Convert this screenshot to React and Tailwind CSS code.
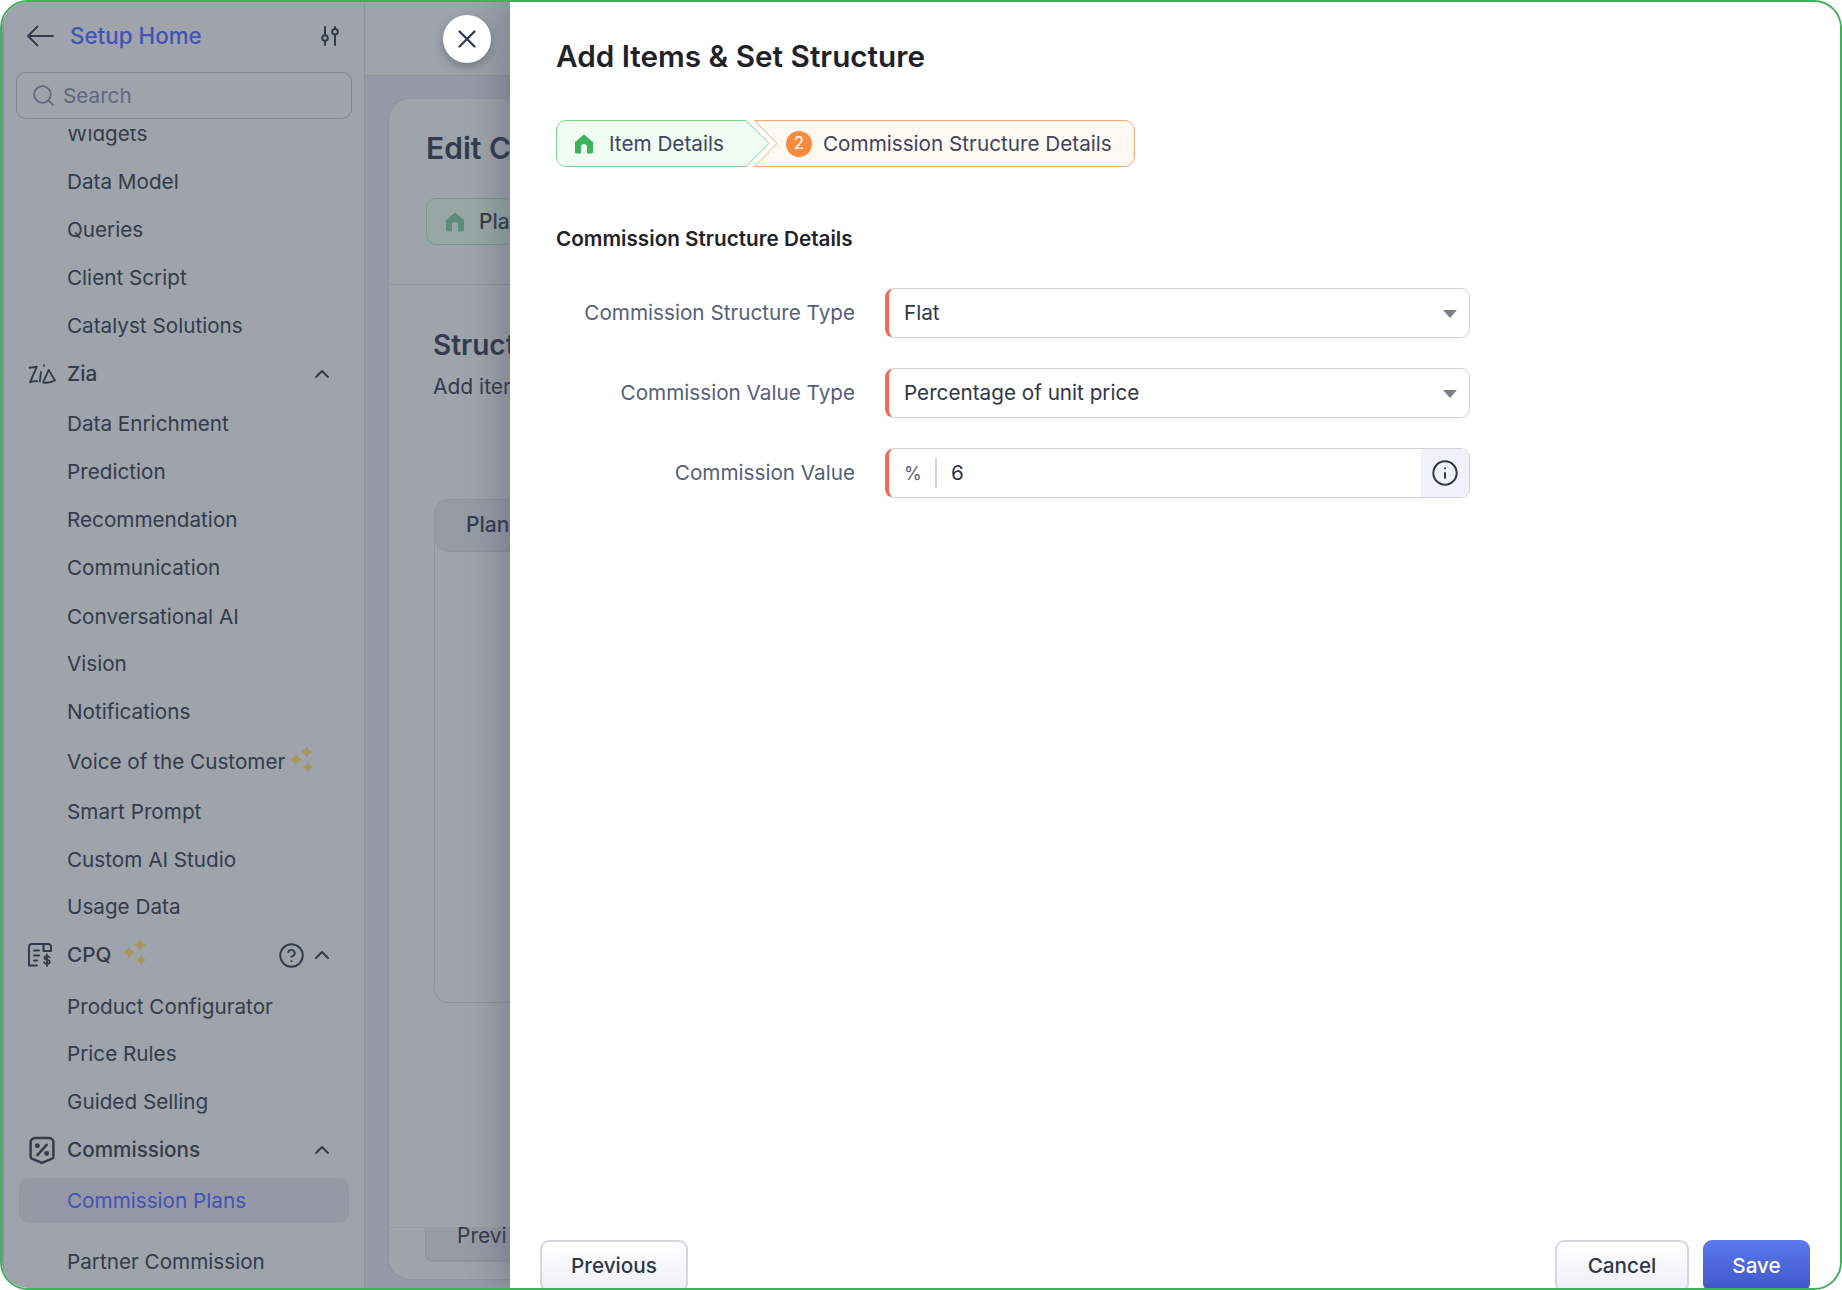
import { ChevronUp, CircleHelp, Info, Search, X } from 'lucide-react';

const sidebarRows = [
  { label: 'Widgets', mt: '' },
  { label: 'Data Model', mt: '' },
  { label: 'Queries', mt: '' },
  { label: 'Client Script', mt: '' },
  { label: 'Catalyst Solutions', mt: '' },
  { label: 'Zia', mt: '', icon: 'zia', open: true },
  { label: 'Data Enrichment', mt: 'mt-[2px]' },
  { label: 'Prediction', mt: '' },
  { label: 'Recommendation', mt: '' },
  { label: 'Communication', mt: '' },
  { label: 'Conversational AI', mt: 'mt-[1px]' },
  { label: 'Vision', mt: '-mt-[1px]' },
  { label: 'Notifications', mt: '' },
  { label: 'Voice of the Customer', mt: 'mt-[2px]', sparkle: true },
  { label: 'Smart Prompt', mt: 'mt-[2px]' },
  { label: 'Custom AI Studio', mt: '' },
  { label: 'Usage Data', mt: '-mt-[1px]' },
  { label: 'CPQ', mt: '', icon: 'cpq', open: true, sparkle: true, help: true },
  { label: 'Product Configurator', mt: 'mt-[4px]' },
  { label: 'Price Rules', mt: '-mt-[1px]' },
  { label: 'Guided Selling', mt: '' },
  { label: 'Commissions', mt: '', icon: 'commission', open: true },
];

function Sparkle({ className }) {
  return (
    <svg viewBox="0 0 24 27" className={className} fill="#a8955a">
      <path d="M17 0Q18.500 4.500 23 6 18.500 7.500 17 12 15.500 7.500 11 6 15.500 4.500 17 0z" />
      <path d="M6 7.500Q7.500 12 12 13.500 7.500 15 6 19.500 4.500 15 0 13.500 4.500 12 6 7.500z" />
      <path d="M18 16Q19.300 19.700 23 21 19.300 22.300 18 26 16.700 22.300 13 21 16.700 19.700 18 16z" />
    </svg>
  );
}

function HomeIcon({ className }) {
  return (
    <svg viewBox="0 0 20 20" className={className} fill="currentColor">
      <path d="M10 0.500 L19 8 V18 a1.500 1.500 0 0 1-1.500 1.500 H13 V13 a3 3 0 0 0-6 0 V19.500 H2.500 A1.500 1.500 0 0 1 1 18 V8 z" />
    </svg>
  );
}

function BackArrow() {
  return (
    <svg viewBox="0 0 28 22" className="w-[28px] h-[22px]" fill="none" stroke="#333b4d" strokeWidth="1.800" strokeLinecap="round" strokeLinejoin="round">
      <path d="M2 11H27M11.500 1.500 2 11l9.500 9.500" />
    </svg>
  );
}

function ZiaIcon() {
  return (
    <svg viewBox="0 0 27 19" className="w-[28px] h-[20px]" fill="none" stroke="#333b4d" strokeWidth="1.800" strokeLinecap="round" strokeLinejoin="round">
      <path d="M1.500 3.500 8.500 2.500 2 17.500Q5.500 16 9 16.500" />
      <path d="M12.500 7.500 11.500 16.500" />
      <path d="M15.500 1v.5" />
      <path d="M14.500 17.500 20 5.500Q23 11 26 15.500 20 19 14.500 17.500z" />
    </svg>
  );
}

function CpqIcon() {
  return (
    <svg viewBox="0 0 24 24" className="w-[24px] h-[24px]" fill="none" stroke="#333b4d" strokeWidth="2" strokeLinecap="round" strokeLinejoin="round">
      <path d="M19 1H4a3 3 0 0 0-3 3v18.500h8" />
      <path d="M15.500 1H20a3 3 0 0 1 3 3v4h-7.500V1" />
      <path d="M6 7.500h5M6 12.500h5M6 17.500h3" />
      <path d="M21.500 14.500c-.6-.9-1.400-1.300-2.500-1.300-1.500 0-2.500.7-2.500 1.800 0 2.600 5.200 1.300 5.200 3.900 0 1.200-1.100 1.900-2.700 1.900-1.300 0-2.300-.5-2.800-1.500M19 11.500v11.500" strokeWidth="1.800" />
    </svg>
  );
}

function CommissionIcon() {
  return (
    <svg viewBox="0 0 26 28" className="w-[28px] h-[29px]" fill="none" stroke="#333b4d" strokeWidth="2.400" strokeLinecap="round" strokeLinejoin="round">
      <path d="M6 2h14a4 4 0 0 1 4 4v14a2 2 0 0 1-1.200 1.800L13 26 3.200 21.800A2 2 0 0 1 2 20V6a4 4 0 0 1 4-4z" />
      <path d="M17.500 8.500l-9 10" />
      <circle cx="8.500" cy="9.500" r="1.200" fill="#333b4d" />
      <circle cx="17.500" cy="17" r="1.200" fill="#333b4d" />
    </svg>
  );
}

function SlidersIcon() {
  return (
    <svg viewBox="0 0 18 20" className="w-[18px] h-[20px]" fill="none" stroke="#333b4d" strokeWidth="2" strokeLinecap="round">
      <path d="M4 1v8M4 15v4M14 1v1.500M14 9v10" />
      <circle cx="4" cy="12" r="2.800" />
      <circle cx="14" cy="5.800" r="2.800" />
    </svg>
  );
}

function SidebarRow({ row }) {
  const icons = { zia: <ZiaIcon />, cpq: <CpqIcon />, commission: <CommissionIcon /> };
  return (
    <div className={`relative flex items-center shrink-0 h-[48px] pl-[65px] pr-[30px] ${row.mt}`}>
      {row.icon && <div className="absolute left-[26px] top-0 bottom-0 flex items-center">{icons[row.icon]}</div>}
      <span className={row.icon ? 'font-medium' : ''}>{row.label}</span>
      {row.sparkle && <Sparkle className={`${row.help ? 'ml-[12px]' : 'ml-[5px]'} -mt-[6px] w-[24px] h-[27px]`} />}
      {row.help && <CircleHelp size={27} strokeWidth={1.700} className="ml-auto mr-[5px]" />}
      {row.open && <ChevronUp size={24} strokeWidth={2} className={row.help ? '' : 'ml-auto'} />}
    </div>
  );
}

function Sidebar() {
  return (
    <aside className="w-[363px] shrink-0 h-full flex flex-col bg-[#9fa3ab] border-r border-[#8f94a0] shadow-[inset_2px_0_0_#8e929c] text-[20.7px] text-[#333b4d]">
      <div className="h-[68px] shrink-0 flex items-center pl-[24px] pr-[25px]">
        <BackArrow />
        <span className="ml-[16px] text-[22.400px] font-medium text-[#4353b4]">Setup Home</span>
        <div className="ml-auto"><SlidersIcon /></div>
      </div>
      <div className="mt-[2px] ml-[14px] mr-[12px] h-[47px] shrink-0 flex items-center gap-[7px] px-[14px] rounded-[10px] border border-[#7f8492] text-[#5f6880]">
        <Search size={25} strokeWidth={1.700} />
        <span>Search</span>
      </div>
      <div className="flex-1 mt-[10px] overflow-hidden">
        <div className="-mt-[19px] flex flex-col">
          {sidebarRows.map((row) => <SidebarRow key={row.label} row={row} />)}
          <div className="ml-[17px] mr-[15px] h-[45px] mt-[4px] shrink-0 flex items-center pl-[48px] rounded-[10px] bg-[#9499a5] text-[#4353b4]">Commission Plans</div>
          <div className="h-[48px] mt-[15px] shrink-0 flex items-center pl-[65px]">Partner Commission</div>
        </div>
      </div>
    </aside>
  );
}

function BackgroundPage() {
  return (
    <main className="flex-1 h-full overflow-hidden flex flex-col bg-[#959aa6] text-[#333b4d]">
      <div className="h-[74px] shrink-0 bg-[#9fa3ab] border-b border-[#8f94a0]" />
      <div className="flex-1 min-h-0 pl-[23px] pt-[22px] pb-[8px]">
        <div className="w-[800px] h-full rounded-l-[22px] border border-[#8f94a0] bg-[#9fa3ab] flex flex-col">
          <div className="h-[186px] shrink-0 pl-[37px] border-b border-[#8f94a0]">
            <h1 className="pt-[29px] text-[30px] leading-[40px] font-semibold whitespace-nowrap">Edit C</h1>
            <div className="mt-[30px] w-[300px] h-[47px] flex items-center gap-[14px] pl-[18px] rounded-[10px] border border-[#6f9f84] bg-[#97a8a4] text-[21px] font-medium">
              <HomeIcon className="w-[20px] h-[20px] text-[#5d8c78]" />
              Pla
            </div>
          </div>
          <div className="pl-[44px] pt-[42px]">
            <h2 className="text-[28px] leading-[36px] font-semibold">Struct</h2>
            <p className="mt-[8px] text-[21px] whitespace-nowrap">Add iter</p>
          </div>
          <div className="ml-[45px] mt-[96px] w-[700px] h-[504px] rounded-[14px] border border-[#8f94a0]">
            <div className="h-[52px] w-[300px] flex items-center pl-[31px] rounded-[14px] bg-[#979ba6] border-b-2 border-[#8f94a0] text-[21px] font-medium">Plan</div>
          </div>
          <div className="mt-auto h-[52px] border-t border-[#959aa6] pl-[36px]">
            <div className="w-[200px] h-[34px] flex items-center pb-[16px] pl-[31px] rounded-b-[8px] bg-[#979ba6] border-x border-b-2 border-[#8f94a0] text-[21px]">Previ</div>
          </div>
        </div>
      </div>
    </main>
  );
}

function Stepper() {
  return (
    <div className="mt-[44px] flex h-[47px] text-[20.7px] text-[#3d465c]">
      <div className="relative w-[214px] h-full flex items-center pl-[18px]">
        <svg viewBox="0 0 214 47" className="absolute inset-0 w-full h-full">
          <path d="M10 .5H190L213 23.500 190 46.500H10A9.500 9.500 0 0 1 .5 37V10A9.500 9.500 0 0 1 10 .5z" fill="#f1fcf3" stroke="#7fd08f" />
        </svg>
        <HomeIcon className="relative w-[20px] h-[20px] text-[#3cb35a]" />
        <span className="relative ml-[15px]">Item Details</span>
      </div>
      <div className="relative -ml-[16px] w-[381px] h-full flex items-center pl-[32px]">
        <svg viewBox="0 0 381 47" className="absolute inset-0 w-full h-full">
          <path d="M.5 .5H370A10 10 0 0 1 380.500 10V37A10 10 0 0 1 370 46.500H.5L23 23.500z" fill="#fff9f3" stroke="#f7a877" />
        </svg>
        <span className="relative w-[26px] h-[26px] rounded-full bg-[#f58b3f] text-white text-[17px] flex items-center justify-center">2</span>
        <span className="relative ml-[11px] whitespace-nowrap">Commission Structure Details</span>
      </div>
    </div>
  );
}

function Field({ label, children, className = '' }) {
  return (
    <div className="flex items-center gap-[30px]">
      <label className="w-[299px] text-right text-[#56607a]">{label}</label>
      <div className={`w-[585px] h-[50px] flex items-center rounded-[9px] border border-[#cfd2da] border-l-[4px] border-l-[#f56a55] text-[#2f3645] ${className}`}>
        {children}
      </div>
    </div>
  );
}

function Caret() {
  return <span className="ml-auto mr-[12px] mt-[2px] w-0 h-0 border-x-[7px] border-x-transparent border-t-[8px] border-t-[#7a7f8c]" />;
}

function Drawer() {
  return (
    <section className="absolute right-0 top-0 bottom-0 w-[1330px] bg-white shadow-[-14px_0_28px_rgba(60,65,85,0.28)] flex flex-col pl-[46px] text-[20.7px]">
      <h1 className="pt-[34px] text-[29.700px] leading-[40px] font-semibold text-[#1f2329]">Add Items &amp; Set Structure</h1>
      <Stepper />
      <h2 className="mt-[58px] leading-[28px] font-semibold text-[#1f2329]">Commission Structure Details</h2>
      <div className="mt-[35px] flex flex-col gap-[30px]">
        <Field label="Commission Structure Type">
          <span className="pl-[15px]">Flat</span>
          <Caret />
        </Field>
        <Field label="Commission Value Type">
          <span className="pl-[15px]">Percentage of unit price</span>
          <Caret />
        </Field>
        <Field label="Commission Value" className="overflow-hidden">
          <span className="pl-[15px] w-[46px] text-[18px] text-[#56607a]">%</span>
          <span className="h-[30px] w-[2px] bg-[#d5d8df]" />
          <span className="pl-[14px]">6</span>
          <span className="ml-auto w-[48px] h-full flex items-center justify-center bg-[#eff2fa]">
            <Info size={28} strokeWidth={1.700} />
          </span>
        </Field>
      </div>
      <div className="mt-auto -mb-[4px] flex items-end pr-[30px] -ml-[16px]">
        <button className="w-[148px] h-[52px] rounded-[9px] border-2 border-[#d5d7de] bg-gradient-to-b from-white to-[#eef0f7] text-[#2f3645] font-medium">Previous</button>
        <button className="ml-auto w-[134px] h-[52px] rounded-[9px] border-2 border-[#d5d7de] bg-gradient-to-b from-white to-[#eef0f7] text-[#2f3645] font-medium">Cancel</button>
        <button className="ml-[14px] w-[107px] h-[52px] rounded-[9px] bg-gradient-to-b from-[#5b78ee] to-[#3f56c8] text-white font-medium">Save</button>
      </div>
    </section>
  );
}

export default function App() {
  return (
    <div className="w-[1842px] h-[1290px] bg-white font-['Inter',sans-serif]">
      <div className="relative w-full h-full flex overflow-hidden rounded-[28px] border-2 border-[#3cb35a]">
        <Sidebar />
        <BackgroundPage />
        <button className="absolute z-10 left-[441px] top-[13px] w-[48px] h-[48px] rounded-full bg-white text-[#333b4d] flex items-center justify-center shadow-[0_4px_10px_rgba(40,45,60,0.35)]">
          <X size={30} strokeWidth={1.800} />
        </button>
        <Drawer />
      </div>
    </div>
  );
}
